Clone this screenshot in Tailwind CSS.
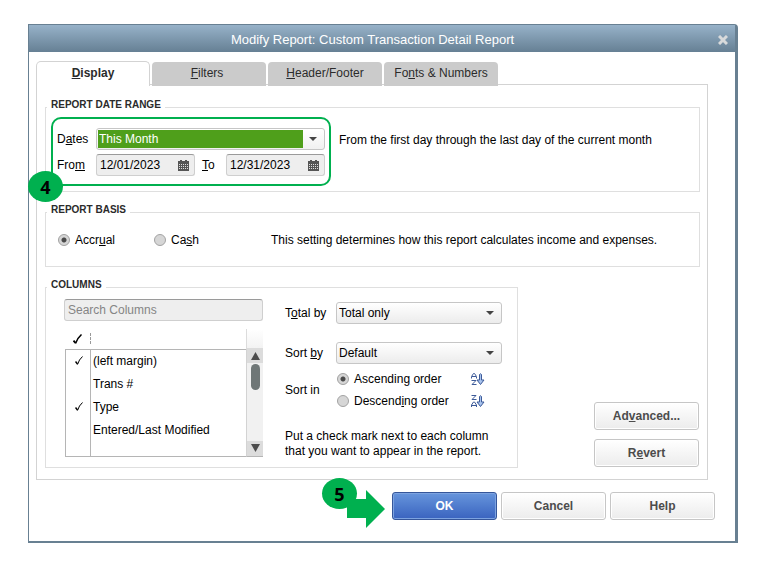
<!DOCTYPE html>
<html lang="en">
<head>
    <meta charset="UTF-8">
    <meta name="viewport" content="width=device-width, initial-scale=1.0">
    <title>Modify Report: Custom Transaction Detail Report</title>
    <script src="https://cdn.jsdelivr.net/npm/@tailwindcss/browser@4"></script>
</head>
<body class="bg-white px-7 pt-6 pb-[26px] font-['Liberation_Sans',Arial,sans-serif] text-[12px] leading-[14px] text-black">
    <div class="rounded-tr-[4px] border-t border-r-[3px] border-b-2 border-l border-[#688092] bg-white">
        <!-- Title bar -->
        <header class="flex h-[27px] items-center bg-linear-to-b from-[#97b2c9] to-[#668094] pr-[7px]">
            <h1 class="flex-1 pr-[2px] text-center text-[13px] leading-[16px] text-white pt-[3px]">Modify Report: Custom Transaction Detail Report</h1>
            <button type="button" aria-label="Close" class="pt-[2px]">
                <svg class="block size-[10px]" viewBox="0 0 10 10" stroke="#d8dadb" stroke-width="3"><path d="M1 1L9 9M9 1L1 9"/></svg>
            </button>
        </header>

        <form class="pt-[9px] pr-[27px] pb-[21px] pl-[7px]" onsubmit="return false">
            <!-- Tabs -->
            <nav class="relative flex items-end gap-[2px] text-[12px] text-[#2b2b2b]" role="tablist">
                <button type="button" role="tab" aria-selected="true" class="-mb-[2px] h-[25px] w-[114px] rounded-t-[5px] border border-b-0 border-[#d3d3d3] bg-white pb-[2px] font-bold"><u>D</u>isplay</button>
                <button type="button" role="tab" class="-mb-[2px] h-[24px] w-[114px] rounded-t-[4px] bg-[#cbcbcb] pr-1 pb-[2px]"><u>F</u>ilters</button>
                <button type="button" role="tab" class="-mb-[2px] h-[24px] w-[114px] rounded-t-[4px] bg-[#cbcbcb] pb-[2px]"><u>H</u>eader/Footer</button>
                <button type="button" role="tab" class="-mb-[2px] h-[24px] w-[114px] rounded-t-[4px] bg-[#cbcbcb] pb-[2px]">Fo<u>n</u>ts &amp; Numbers</button>
            </nav>

            <div class="flex flex-col gap-3 border border-[#d3d3d3] pt-[14px] pr-[7px] pb-[11px] pl-2">
                <!-- Date range -->
                <fieldset class="border border-[#dfdfdf] pb-[5px]">
                    <legend class="ml-px px-1 pb-1 text-[10px] leading-[12px] font-bold text-[#2b2b2b]">REPORT DATE RANGE</legend>
                    <div class="flex items-start gap-2 pt-[2px] pl-[5px]">
                        <div class="relative flex w-[280px] shrink-0 flex-col gap-1 rounded-[10px] border-2 border-[#00b04f] pt-[9px] pr-1 pb-2 pl-1">
                            <div class="flex items-center">
                                <label for="dates" class="w-[39px]">D<u>a</u>tes</label>
                                <div class="flex h-[22px] flex-1 items-center rounded-[3px] border border-[#c6c6c6] bg-linear-to-b from-white to-[#f1f1f1] p-px">
                                    <select id="dates" class="h-[18px] flex-1 appearance-none bg-[#4f9f1b] pl-px text-white">
                                        <option>This Month</option>
                                    </select>
                                    <svg class="mx-[6px] h-[4px] w-[8px]" viewBox="0 0 8 4" fill="#444"><path d="M0 0H8L4 4Z"/></svg>
                                </div>
                            </div>
                            <div class="flex items-center">
                                <label for="from" class="w-[39px]">Fro<u>m</u></label>
                                <div class="flex h-[22px] w-[99px] items-center rounded-[3px] border border-[#cfcfcf] border-t-[#9a9a9a] bg-[#eeeeee] px-[3px]">
                                    <input id="from" type="text" value="12/01/2023" class="w-[78px] bg-transparent">
                                    <svg class="h-[11px] w-[11px]" viewBox="0 0 11 11"><path fill="#555" d="M0 1H2V0H4V1H7V0H9V1H11V11H0Z"/><path stroke="#ddd" stroke-dasharray="1 1" d="M1 4.500H10M1 6.500H10M1 8.500H10"/></svg>
                                </div>
                                <label for="to" class="w-[31px] pl-[7px]"><u>T</u>o</label>
                                <div class="flex h-[22px] flex-1 items-center rounded-[3px] border border-[#cfcfcf] border-t-[#9a9a9a] bg-[#eeeeee] px-[3px]">
                                    <input id="to" type="text" value="12/31/2023" class="w-[78px] bg-transparent">
                                    <svg class="h-[11px] w-[11px]" viewBox="0 0 11 11"><path fill="#555" d="M0 1H2V0H4V1H7V0H9V1H11V11H0Z"/><path stroke="#ddd" stroke-dasharray="1 1" d="M1 4.500H10M1 6.500H10M1 8.500H10"/></svg>
                                </div>
                            </div>
                            <span class="absolute top-[52px] -left-[25px] flex h-[31px] w-[35px] items-center justify-center rounded-[50%] bg-[#00b04f] font-['Open_Sans',sans-serif] text-[18px] leading-[20px] font-bold">4</span>
                        </div>
                        <p class="pt-4">From the first day through the last day of the current month</p>
                    </div>
                </fieldset>

                <!-- Basis -->
                <fieldset class="border border-[#dfdfdf] pb-[19px]">
                    <legend class="ml-px px-1 pb-1 text-[10px] leading-[12px] font-bold text-[#2b2b2b]">REPORT BASIS</legend>
                    <div class="flex items-center pt-[13px] pl-3">
                        <label class="flex w-24 items-center gap-[5px]">
                            <input type="radio" name="basis" checked class="size-[12px] appearance-none rounded-full border border-[#a3a3a3] bg-[#d6d6d6] checked:bg-[radial-gradient(circle,#4a4a4a_2px,#d6d6d6_3px)]">
                            <span>Accr<u>u</u>al</span>
                        </label>
                        <label class="flex w-[117px] items-center gap-[5px]">
                            <input type="radio" name="basis" class="size-[12px] appearance-none rounded-full border border-[#a3a3a3] bg-[#d6d6d6] checked:bg-[radial-gradient(circle,#4a4a4a_2px,#d6d6d6_3px)]">
                            <span>Ca<u>s</u>h</span>
                        </label>
                        <p>This setting determines how this report calculates income and expenses.</p>
                    </div>
                </fieldset>

                <div class="flex items-end justify-between">
                    <!-- Columns -->
                    <fieldset class="w-[473px] border border-[#dfdfdf] pb-2">
                        <legend class="ml-px px-1 pb-1 text-[10px] leading-[12px] font-bold text-[#2b2b2b]">COLUMNS</legend>
                        <div class="flex gap-[22px] pl-[18px]">
                            <div class="w-[199px] pt-1">
                                <input type="text" aria-label="Search columns" placeholder="Search Columns" class="block h-[22px] w-full rounded-[3px] border border-[#cfcfcf] border-t-[#9a9a9a] bg-[#eeeeee] px-[3px] placeholder:text-[#858585]">
                                <div class="mt-2 flex pl-px">
                                    <table class="flex-1 border-collapse text-left">
                                        <thead>
                                            <tr class="h-[20px]">
                                                <th class="w-[25px] pl-[7px]"><svg class="h-[10px] w-[9px]" viewBox="0 0 9 10" fill="none" stroke="#000"><path stroke-width="2" d="M.5 6.500L2.500 9"/><path stroke-width="1.500" d="M2.500 9.500Q4.500 4 8.500 .5"/></svg></th>
                                                <th><span class="-ml-px block h-[11px] border-l border-dashed border-[#999]"></span></th>
                                            </tr>
                                        </thead>
                                        <tbody class="border border-r-0 border-[#b5b5b5]">
                                            <tr class="h-[23px]">
                                                <td class="border-r border-[#b5b5b5] pl-[9px]"><svg class="h-[9px] w-[8px]" viewBox="0 0 8 9" fill="none" stroke="#000"><path stroke-width="1.500" d="M.5 5.500L2.500 8"/><path d="M2.500 8.500Q4 3.500 7.500 .5"/></svg></td>
                                                <td class="pl-[2px]">(left margin)</td>
                                            </tr>
                                            <tr class="h-[23px]">
                                                <td class="border-r border-[#b5b5b5]"></td>
                                                <td class="pl-[2px]">Trans #</td>
                                            </tr>
                                            <tr class="h-[23px]">
                                                <td class="border-r border-[#b5b5b5] pl-[9px]"><svg class="h-[9px] w-[8px]" viewBox="0 0 8 9" fill="none" stroke="#000"><path stroke-width="1.500" d="M.5 5.500L2.500 8"/><path d="M2.500 8.500Q4 3.500 7.500 .5"/></svg></td>
                                                <td class="pl-[2px]">Type</td>
                                            </tr>
                                            <tr class="h-[23px]">
                                                <td class="border-r border-[#b5b5b5]"></td>
                                                <td class="pl-[2px]">Entered/Last Modified</td>
                                            </tr>
                                            <tr class="h-[15px]">
                                                <td class="border-r border-[#b5b5b5]"></td>
                                                <td></td>
                                            </tr>
                                        </tbody>
                                    </table>
                                    <div class="flex w-[17px] flex-col">
                                        <div class="h-[20px] border-b border-l border-[#dcdcdc] bg-linear-to-b from-white to-[#f3f3f3]"></div>
                                        <div class="flex flex-1 flex-col items-center justify-between border-b border-l border-b-[#b5b5b5] border-l-[#d3d3d3] bg-[#f1f1f1]">
                                            <div class="flex w-full flex-col items-center">
                                                <div class="flex h-[14px] w-full items-center justify-center bg-[#dcdcdc]"><svg class="h-[8px] w-[9px]" viewBox="0 0 9 8" fill="#4c4c4c"><path d="M4.500 0L9 8H0Z"/></svg></div>
                                                <div class="mt-px h-[26px] w-[9px] rounded-full bg-[#6f7777]"></div>
                                            </div>
                                            <div class="flex h-[15px] w-full items-center justify-center bg-[#dcdcdc]"><svg class="h-[8px] w-[9px]" viewBox="0 0 9 8" fill="#4c4c4c"><path d="M0 0H9L4.500 8Z"/></svg></div>
                                        </div>
                                    </div>
                                </div>
                            </div>

                            <div class="w-[217px] pt-[7px]">
                                <div class="flex items-center">
                                    <label for="total" class="w-[51px]">T<u>o</u>tal by</label>
                                    <div class="relative flex-1">
                                        <select id="total" class="block h-[22px] w-full appearance-none rounded-[3px] border border-[#c6c6c6] bg-linear-to-b from-white to-[#ececec] px-[2px]">
                                            <option>Total only</option>
                                        </select>
                                        <svg class="pointer-events-none absolute top-[9px] right-2 h-[4px] w-[8px]" viewBox="0 0 8 4" fill="#444"><path d="M0 0H8L4 4Z"/></svg>
                                    </div>
                                </div>
                                <div class="mt-[18px] flex items-center">
                                    <label for="sort" class="w-[51px]">Sort <u>b</u>y</label>
                                    <div class="relative flex-1">
                                        <select id="sort" class="block h-[22px] w-full appearance-none rounded-[3px] border border-[#c6c6c6] bg-linear-to-b from-white to-[#ececec] px-[2px]">
                                            <option>Default</option>
                                        </select>
                                        <svg class="pointer-events-none absolute top-[9px] right-2 h-[4px] w-[8px]" viewBox="0 0 8 4" fill="#444"><path d="M0 0H8L4 4Z"/></svg>
                                    </div>
                                </div>
                                <div class="mt-2 flex items-center">
                                    <span class="w-[52px]">Sort in</span>
                                    <div class="flex flex-1 flex-col gap-2">
                                        <div class="flex items-center">
                                            <label class="flex w-[134px] items-center gap-[5px] whitespace-nowrap">
                                                <input type="radio" name="order" checked class="size-[12px] appearance-none rounded-full border border-[#a3a3a3] bg-[#d6d6d6] checked:bg-[radial-gradient(circle,#4a4a4a_2px,#d6d6d6_3px)]">
                                                <span>Ascendin<u>g</u> order</span>
                                            </label>
                                            <svg class="h-[13px] w-[14px]" viewBox="0 0 14 13" fill="none" stroke="#3d5a98"><path d="M.5 5.500V3.500L2.500 .5H3.500L5.500 3.500V5.500M1 3.500H5M.5 7.500H5L1 11.500H5.500"/><path fill="#a9c4ee" d="M8.500 1.500Q9.500 0 10.500 1.500V7H13L9.500 11.500L6 7H8.500Z"/></svg>
                                        </div>
                                        <div class="flex items-center">
                                            <label class="flex w-[134px] items-center gap-[5px] whitespace-nowrap">
                                                <input type="radio" name="order" class="size-[12px] appearance-none rounded-full border border-[#a3a3a3] bg-[#d6d6d6] checked:bg-[radial-gradient(circle,#4a4a4a_2px,#d6d6d6_3px)]">
                                                <span>Descend<u>i</u>ng order</span>
                                            </label>
                                            <svg class="h-[13px] w-[14px]" viewBox="0 0 14 13" fill="none" stroke="#3d5a98"><path d="M.5 .5H5L1 4.500H5.500M.5 12V10L2.500 7H3.500L5.500 10V12M1 10.500H5"/><path fill="#a9c4ee" d="M8.500 1.500Q9.500 0 10.500 1.500V7H13L9.500 11.500L6 7H8.500Z"/></svg>
                                        </div>
                                    </div>
                                </div>
                                <p class="mt-[21px] leading-[15px] whitespace-nowrap">Put a check mark next to each column<br>that you want to appear in the report.</p>
                            </div>
                        </div>
                    </fieldset>

                    <div class="flex flex-col gap-[9px] pr-px pb-px font-bold text-[#4c4c4c]">
                        <button type="button" class="h-[28px] w-[105px] rounded-[3px] border border-[#c6c6c6] bg-linear-to-b from-white to-[#ececec] inset-ring inset-ring-white">Ad<u>v</u>anced...</button>
                        <button type="button" class="h-[28px] w-[105px] rounded-[3px] border border-[#c6c6c6] bg-linear-to-b from-white to-[#ececec] inset-ring inset-ring-white">R<u>e</u>vert</button>
                    </div>
                </div>
            </div>

            <!-- Dialog buttons -->
            <footer class="-mr-[7px] mt-3 flex justify-end gap-1 font-bold text-[#4c4c4c]">
                <div class="relative">
                    <svg class="absolute -top-[2px] -left-[45px] h-[38px] w-[38px]" viewBox="0 0 38 38" fill="#00b04f"><path d="M0 9H19V0L38 19L19 38V28H0Z"/></svg>
                    <span class="absolute -top-[14px] -left-[70px] flex h-[31px] w-[35px] items-center justify-center rounded-[50%] bg-[#00b04f] font-['Open_Sans',sans-serif] text-[18px] leading-[20px] text-black">5</span>
                    <button type="submit" class="h-[28px] w-[105px] rounded-[3px] border border-[#35569a] bg-linear-to-b from-[#6795dc] to-[#3a63bf] text-white inset-ring inset-ring-[#7da3e0]">OK</button>
                </div>
                <button type="button" class="h-[28px] w-[105px] rounded-[3px] border border-[#c6c6c6] bg-linear-to-b from-white to-[#ececec] inset-ring inset-ring-white">Cancel</button>
                <button type="button" class="h-[28px] w-[105px] rounded-[3px] border border-[#c6c6c6] bg-linear-to-b from-white to-[#ececec] inset-ring inset-ring-white">Help</button>
            </footer>
        </form>
    </div>
</body>
</html>
